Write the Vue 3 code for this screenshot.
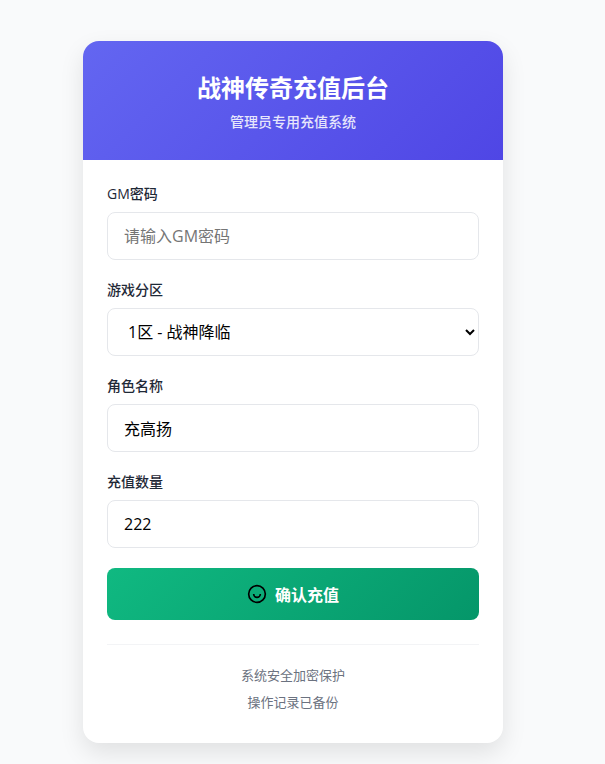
<template>
  <main class="page">
    <section class="card">
      <header class="card-header">
        <h1>战神传奇充值后台</h1>
        <p>管理员专用充值系统</p>
      </header>

      <div class="card-body">
        <form class="form" @submit.prevent>
          <div class="form-group">
            <label for="password">GM密码</label>
            <input id="password" v-model="form.password" type="password" placeholder="请输入GM密码" />
          </div>
          <div class="form-group">
            <label for="zone">游戏分区</label>
            <select id="zone" v-model="form.zone">
              <option v-for="z in zones" :key="z.id" :value="z.id">{{ z.name }}</option>
            </select>
          </div>
          <div class="form-group">
            <label for="role">角色名称</label>
            <input id="role" v-model="form.role" type="text" />
          </div>
          <div class="form-group">
            <label for="amount">充值数量</label>
            <input id="amount" v-model="form.amount" type="text" inputmode="numeric" />
          </div>
          <button type="submit" class="submit-btn">
            <svg class="btn-icon" viewBox="0 0 24 24" aria-hidden="true">
              <circle cx="12" cy="12" r="10" />
              <path d="M8 12a4 4 0 0 0 8 0" />
            </svg>
            确认充值
          </button>
        </form>

        <footer class="card-footer">
          <p v-for="note in notes" :key="note">{{ note }}</p>
        </footer>
      </div>
    </section>
  </main>
</template>

<script setup>
import { reactive } from 'vue'

const zones = [
  { id: 1, name: '1区 - 战神降临' }
]

const notes = ['系统安全加密保护', '操作记录已备份']

const form = reactive({
  password: '',
  zone: 1,
  role: '充高扬',
  amount: '222'
})
</script>

<style>
body {
  background: #f9fafb;
}
</style>

<style scoped>
* {
  box-sizing: border-box;
  margin: 0;
}

.page {
  display: flex;
  justify-content: center;
  padding: 41px 39px 21px 20px;
  font-family: "Open Sans", "Noto Sans CJK SC", sans-serif;
  color: #1f2937;
}

.card {
  width: 100%;
  max-width: 420px;
  background: #ffffff;
  border-radius: 16px;
  box-shadow: 0 10px 25px rgba(0, 0, 0, 0.1);
  overflow: hidden;
}

.card-header {
  display: flex;
  flex-direction: column;
  gap: 4px;
  padding: 28px 24px;
  text-align: center;
  color: #ffffff;
  background: linear-gradient(135deg, #6366f1, #4f46e5);
}

.card-header h1 {
  font-size: 24px;
  font-weight: 700;
  line-height: 38px;
}

.card-header p {
  font-size: 14px;
  font-weight: 500;
  line-height: 21px;
  opacity: 0.85;
}

.card-body {
  padding: 24px;
}

.form {
  display: flex;
  flex-direction: column;
  gap: 20px;
}

.form-group {
  display: flex;
  flex-direction: column;
  gap: 8px;
}

label {
  font-size: 14px;
  font-weight: 500;
  line-height: 20px;
}

input,
select {
  width: 100%;
  height: 48px;
  padding: 0 16px;
  border: 1px solid #e5e7eb;
  border-radius: 8px;
  background: #ffffff;
  font-family: inherit;
  font-size: 16px;
  color: #000000;
}

input:focus,
select:focus {
  outline: none;
  border-color: #6366f1;
}

.submit-btn {
  display: flex;
  align-items: center;
  justify-content: center;
  gap: 8px;
  height: 52px;
  border: none;
  border-radius: 8px;
  background: linear-gradient(135deg, #10b981, #059669);
  font-family: inherit;
  font-size: 16px;
  font-weight: 700;
  color: #ffffff;
  cursor: pointer;
}

.btn-icon {
  width: 20px;
  height: 20px;
  fill: none;
  stroke: #000000;
  stroke-width: 2;
}

.card-footer {
  margin-top: 24px;
  padding-top: 20px;
  border-top: 1px solid #f3f4f6;
  text-align: center;
}

.card-footer p {
  margin-bottom: 6px;
  font-size: 13px;
  line-height: 21px;
  color: #6b7280;
}
</style>
